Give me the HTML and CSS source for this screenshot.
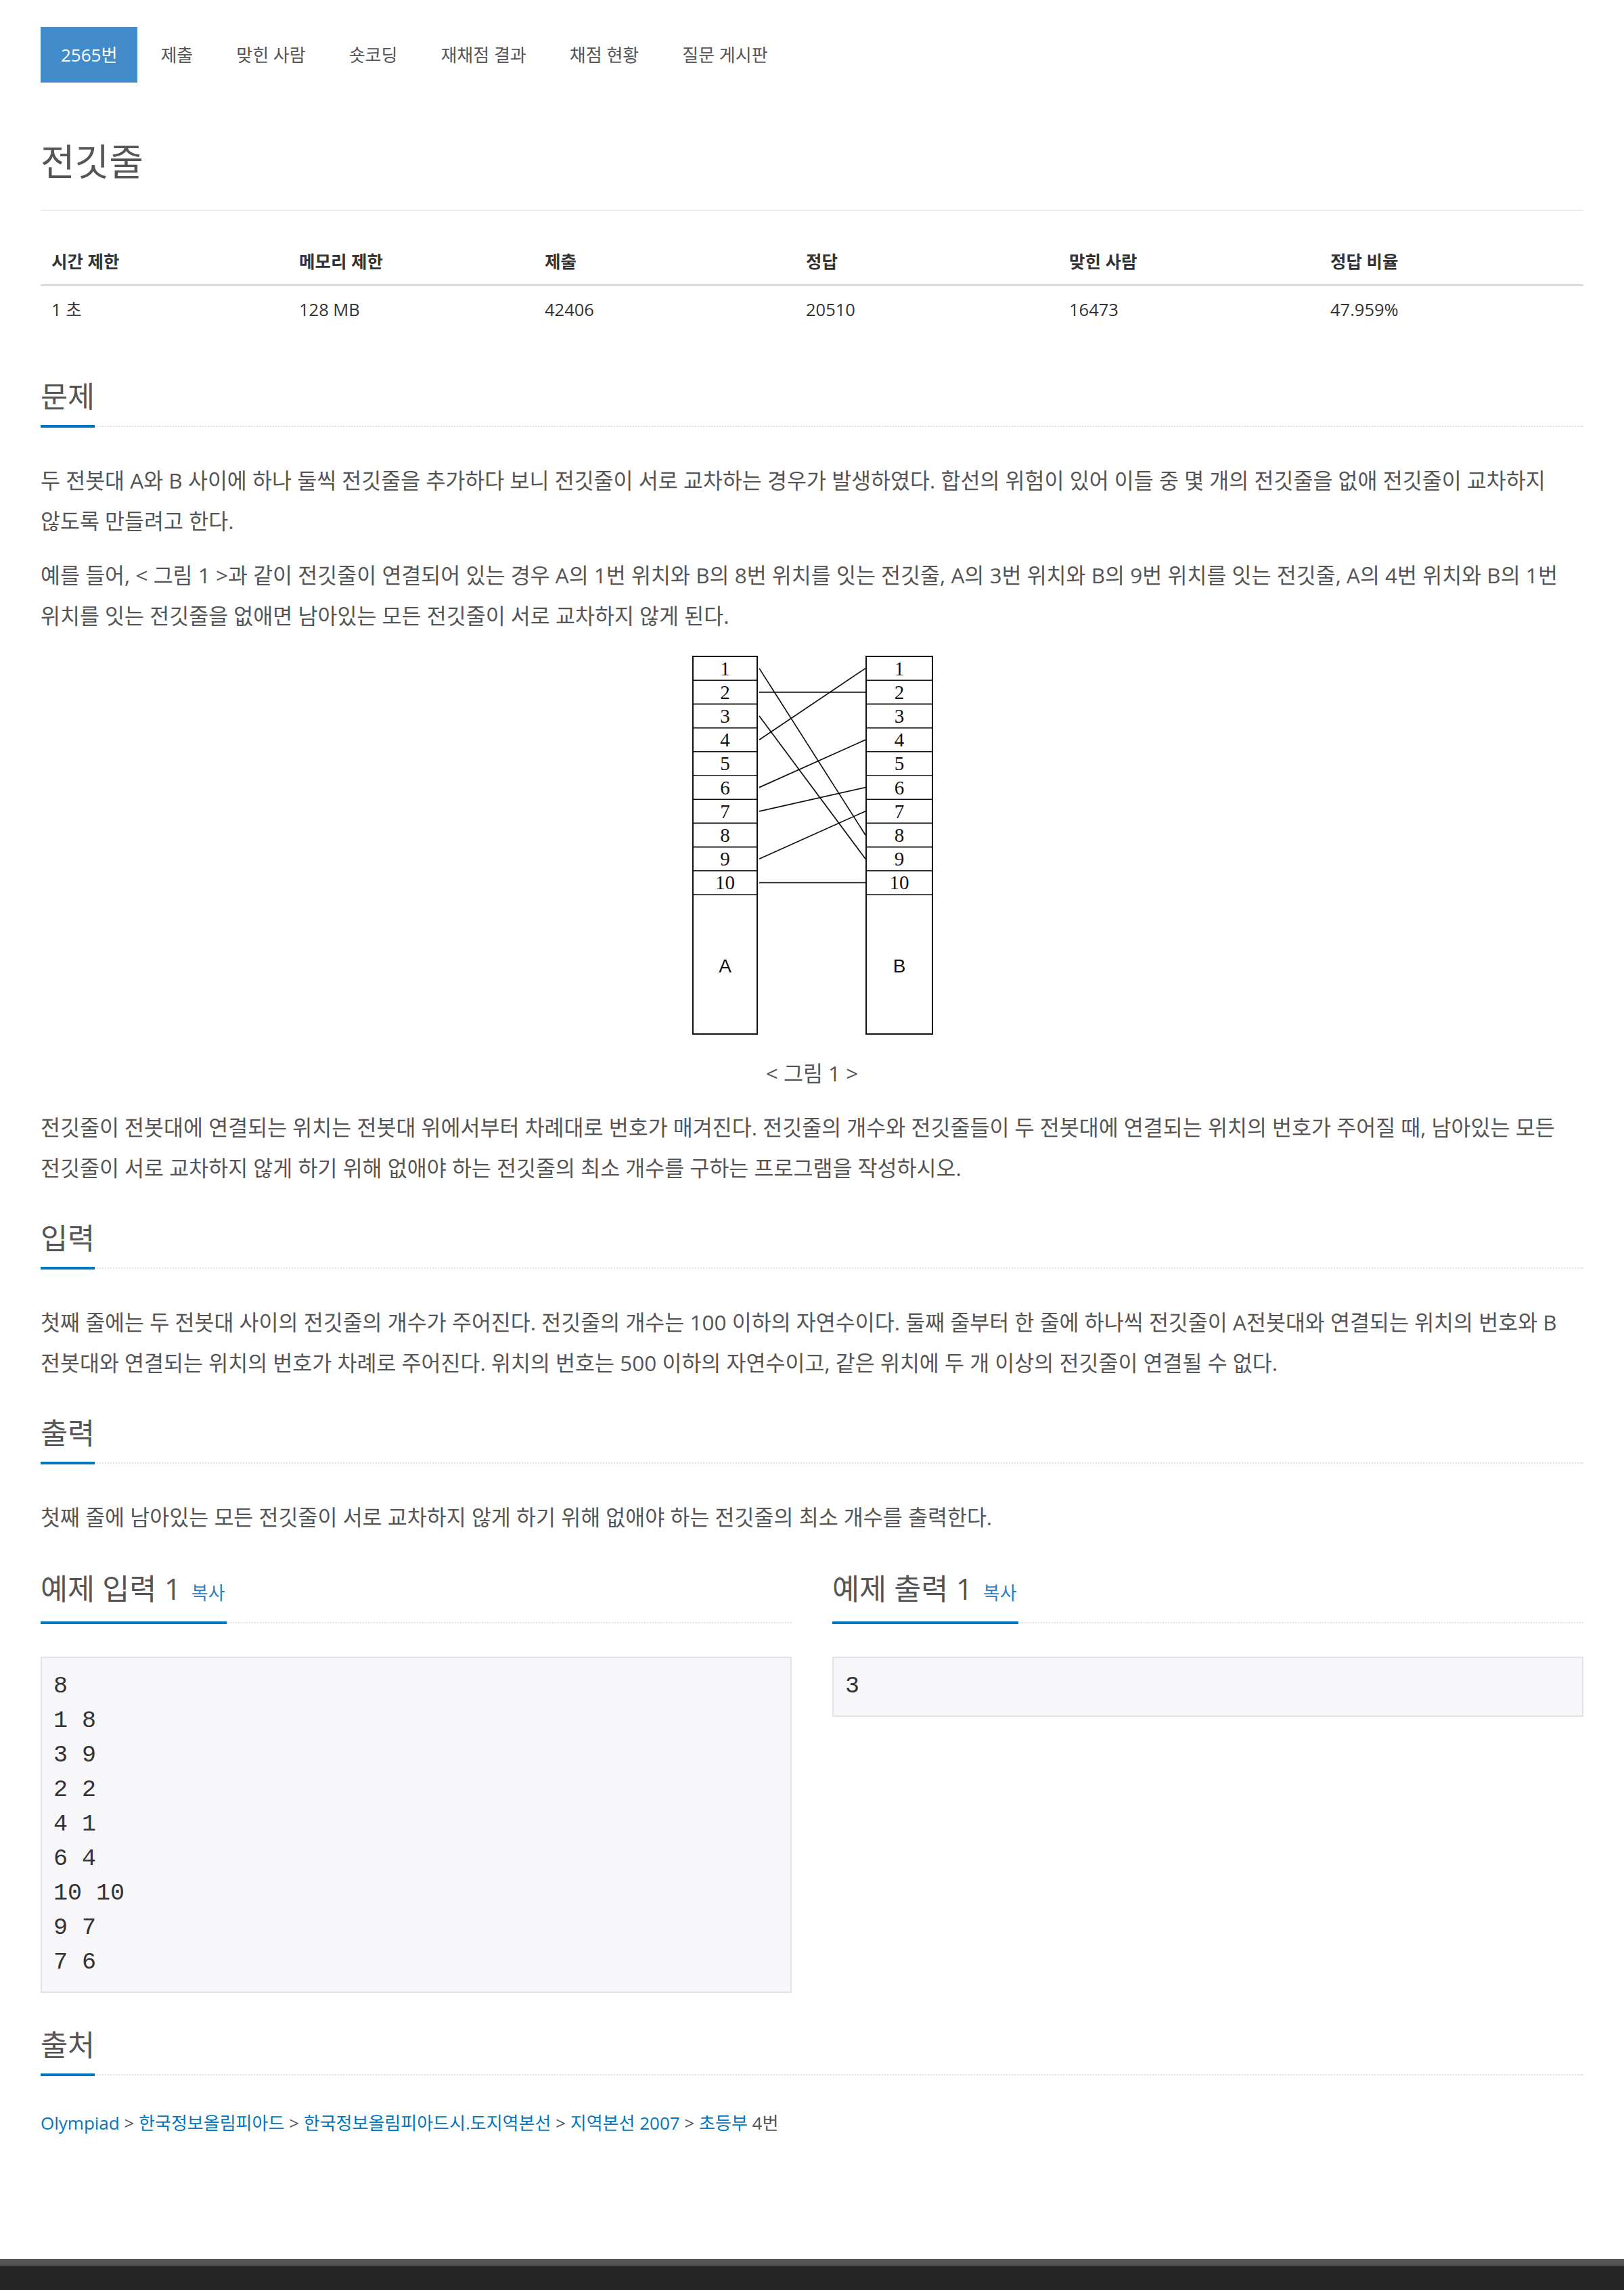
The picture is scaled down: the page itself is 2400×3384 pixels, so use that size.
FILE: index.html
```html
<!DOCTYPE html>
<html lang="ko">
<head>
<meta charset="utf-8">
<title>2565번: 전깃줄</title>
<link rel="stylesheet" href="styles.css">
</head>
<body>
<div class="page">
  <ul class="tabs">
    <li class="active"><a>2565번</a></li>
    <li><a>제출</a></li>
    <li><a>맞힌 사람</a></li>
    <li><a>숏코딩</a></li>
    <li><a>재채점 결과</a></li>
    <li><a>채점 현황</a></li>
    <li><a>질문 게시판</a></li>
  </ul>

  <div class="page-header"><h1>전깃줄</h1></div>

  <div class="info">
    <div class="th">시간 제한</div>
    <div class="th">메모리 제한</div>
    <div class="th">제출</div>
    <div class="th">정답</div>
    <div class="th">맞힌 사람</div>
    <div class="th">정답 비율</div>
    <div class="td">1 초</div>
    <div class="td">128 MB</div>
    <div class="td">42406</div>
    <div class="td">20510</div>
    <div class="td">16473</div>
    <div class="td">47.959%</div>
  </div>

  <section class="sec sec-problem">
    <div class="headline"><h2>문제</h2></div>
    <p>두 전봇대 A와 B 사이에 하나 둘씩 전깃줄을 추가하다 보니 전깃줄이 서로 교차하는 경우가 발생하였다. 합선의 위험이 있어 이들 중 몇 개의 전깃줄을 없애 전깃줄이 교차하지 않도록 만들려고 한다.</p>
    <p>예를 들어, &lt; 그림 1 &gt;과 같이 전깃줄이 연결되어 있는 경우 A의 1번 위치와 B의 8번 위치를 잇는 전깃줄, A의 3번 위치와 B의 9번 위치를 잇는 전깃줄, A의 4번 위치와 B의 1번 위치를 잇는 전깃줄을 없애면 남아있는 모든 전깃줄이 서로 교차하지 않게 된다.</p>
    <div class="figure">
      <svg class="fig" width="362" height="562" viewBox="0 0 362 562">
        <g fill="none" stroke="#111" stroke-width="2">
          <rect x="5" y="2" width="95" height="558"/>
          <rect x="261" y="2" width="98" height="558"/>
        </g>
        <g stroke="#111" stroke-width="1.6">
          <line x1="5" x2="100" y1="37.2" y2="37.2"/>
          <line x1="5" x2="100" y1="72.4" y2="72.4"/>
          <line x1="5" x2="100" y1="107.6" y2="107.6"/>
          <line x1="5" x2="100" y1="142.8" y2="142.8"/>
          <line x1="5" x2="100" y1="178" y2="178"/>
          <line x1="5" x2="100" y1="213.2" y2="213.2"/>
          <line x1="5" x2="100" y1="248.4" y2="248.4"/>
          <line x1="5" x2="100" y1="283.6" y2="283.6"/>
          <line x1="5" x2="100" y1="318.8" y2="318.8"/>
          <line x1="5" x2="100" y1="354" y2="354"/>
          <line x1="261" x2="359" y1="37.2" y2="37.2"/>
          <line x1="261" x2="359" y1="72.4" y2="72.4"/>
          <line x1="261" x2="359" y1="107.6" y2="107.6"/>
          <line x1="261" x2="359" y1="142.8" y2="142.8"/>
          <line x1="261" x2="359" y1="178" y2="178"/>
          <line x1="261" x2="359" y1="213.2" y2="213.2"/>
          <line x1="261" x2="359" y1="248.4" y2="248.4"/>
          <line x1="261" x2="359" y1="283.6" y2="283.6"/>
          <line x1="261" x2="359" y1="318.8" y2="318.8"/>
          <line x1="261" x2="359" y1="354" y2="354"/>
        </g>
        <g stroke="#111" stroke-width="1.7">
          <line x1="103" y1="19.6" x2="260" y2="266"/>
          <line x1="103" y1="54.8" x2="260" y2="54.8"/>
          <line x1="103" y1="90" x2="260" y2="301.2"/>
          <line x1="103" y1="125.2" x2="260" y2="19.6"/>
          <line x1="103" y1="195.6" x2="260" y2="125.2"/>
          <line x1="103" y1="230.8" x2="260" y2="195.6"/>
          <line x1="103" y1="301.2" x2="260" y2="230.8"/>
          <line x1="103" y1="336.4" x2="260" y2="336.4"/>
        </g>
        <g class="num" text-anchor="middle">
          <text x="52.5" y="29.6">1</text>
          <text x="52.5" y="64.8">2</text>
          <text x="52.5" y="100">3</text>
          <text x="52.5" y="135.2">4</text>
          <text x="52.5" y="170.4">5</text>
          <text x="52.5" y="205.6">6</text>
          <text x="52.5" y="240.8">7</text>
          <text x="52.5" y="276">8</text>
          <text x="52.5" y="311.2">9</text>
          <text x="52.5" y="346.4">10</text>
          <text x="310" y="29.6">1</text>
          <text x="310" y="64.8">2</text>
          <text x="310" y="100">3</text>
          <text x="310" y="135.2">4</text>
          <text x="310" y="170.4">5</text>
          <text x="310" y="205.6">6</text>
          <text x="310" y="240.8">7</text>
          <text x="310" y="276">8</text>
          <text x="310" y="311.2">9</text>
          <text x="310" y="346.4">10</text>
        </g>
        <g class="lbl" text-anchor="middle">
          <text x="52.5" y="469">A</text>
          <text x="310" y="469">B</text>
        </g>
      </svg>
    </div>
    <p class="caption">&lt; 그림 1 &gt;</p>
    <p>전깃줄이 전봇대에 연결되는 위치는 전봇대 위에서부터 차례대로 번호가 매겨진다. 전깃줄의 개수와 전깃줄들이 두 전봇대에 연결되는 위치의 번호가 주어질 때, 남아있는 모든 전깃줄이 서로 교차하지 않게 하기 위해 없애야 하는 전깃줄의 최소 개수를 구하는 프로그램을 작성하시오.</p>
  </section>

  <section class="sec sec-input">
    <div class="headline"><h2>입력</h2></div>
    <p>첫째 줄에는 두 전봇대 사이의 전깃줄의 개수가 주어진다. 전깃줄의 개수는 100 이하의 자연수이다. 둘째 줄부터 한 줄에 하나씩 전깃줄이 A<wbr>전봇대와 연결되는 위치의 번호와 B<wbr>전봇대와 연결되는 위치의 번호가 차례로 주어진다. 위치의 번호는 500 이하의 자연수이고, 같은 위치에 두 개 이상의 전깃줄이 연결될 수 없다.</p>
  </section>

  <section class="sec sec-output">
    <div class="headline"><h2>출력</h2></div>
    <p>첫째 줄에 남아있는 모든 전깃줄이 서로 교차하지 않게 하기 위해 없애야 하는 전깃줄의 최소 개수를 출력한다.</p>
  </section>

  <div class="samples">
    <div class="sample">
      <div class="headline"><h2>예제 입력 1 <a class="copy">복사</a></h2></div>
      <pre class="sampledata">8
1 8
3 9
2 2
4 1
6 4
10 10
9 7
7 6</pre>
    </div>
    <div class="sample">
      <div class="headline"><h2>예제 출력 1 <a class="copy">복사</a></h2></div>
      <pre class="sampledata">3</pre>
    </div>
  </div>

  <section class="sec sec-source">
    <div class="headline"><h2>출처</h2></div>
    <p class="source"><a>Olympiad</a> &gt; <a>한국정보올림피아드</a> &gt; <a>한국정보올림피아드시.도지역본선</a> &gt; <a>지역본선 2007</a> &gt; <a>초등부</a> 4번</p>
  </section>
</div>
<footer class="footer"></footer>
</body>
</html>
```

FILE: styles.css
```css
* { box-sizing: border-box; }
html, body { margin: 0; padding: 0; background: #fff; }
body {
  font-family: "Open Sans", "Noto Sans CJK KR", sans-serif;
  color: #333;
  word-break: keep-all;
}
.page {
  width: 2400px;
  padding: 40px 60px 0;
}

/* tabs */
.tabs {
  display: flex;
  gap: 4px;
  list-style: none;
  margin: 0;
  padding: 0;
}
.tabs a {
  display: block;
  padding: 20px 30px;
  line-height: 42px;
  font-size: 26px;
  color: #555;
}
.tabs .active a {
  background: #428bca;
  color: #fff;
}

/* title */
.page-header {
  margin-top: 86px;
  padding-bottom: 42px;
  border-bottom: 2px solid #eee;
}
.page-header h1 {
  margin: 0;
  font-size: 55px;
  line-height: 60px;
  font-weight: 400;
  color: #555;
}

/* info table */
.info {
  display: grid;
  grid-template-columns: 366fr 363fr 386fr 389fr 386fr 390fr;
  margin-top: 40px;
  font-size: 25.5px;
  color: #333;
}
.info .th {
  font-weight: 700;
  padding: 16px;
  line-height: 36px;
  border-bottom: 3px solid #ddd;
}
.info .td {
  padding: 16px;
  line-height: 36px;
}

/* sections */
.sec { margin-top: 46px; }
.sec-problem { margin-top: 67px; }
.sec-source { margin-top: 49px; }

.headline {
  border-bottom: 2px dotted #dfe3e8;
  margin-bottom: 49px;
}
.headline h2 {
  display: inline-block;
  margin: 0 0 -3px;
  padding-bottom: 14px;
  font-size: 43.5px;
  line-height: 56px;
  font-weight: 400;
  color: #555;
  border-bottom: 4px solid #0076c0;
}
.copy {
  font-size: 27px;
  color: #2f7fc4;
  margin-left: 4px;
  margin-right: 2px;
}

.sec p {
  margin: 0 0 20px;
  font-size: 31.5px;
  line-height: 60px;
  color: #555;
}
.figure {
  padding-top: 8px;
  margin-bottom: 26px;
}
.fig {
  display: block;
  margin: 0 auto;
}
.fig .num text {
  font-family: "Liberation Serif", serif;
  font-size: 29px;
  fill: #111;
}
.fig .lbl text {
  font-family: "Liberation Sans", sans-serif;
  font-size: 28px;
  fill: #111;
}
.sec p.caption {
  text-align: center;
}

/* samples */
.samples {
  display: grid;
  grid-template-columns: 1fr 1fr;
  gap: 60px;
  margin-top: 48px;
  align-items: start;
}
.sampledata {
  margin: 0;
  padding: 17px;
  border: 2px solid #e1e1e8;
  background: #f7f7f9;
  font-family: "Liberation Mono", monospace;
  font-size: 35px;
  line-height: 51px;
  color: #333;
  white-space: pre;
}

/* source */
.sec p.source {
  font-size: 26px;
  line-height: 42px;
  color: #555;
}
.source a { color: #0076c0; }

/* footer */
.footer {
  margin-top: 180px;
  border-top: 10px solid #555;
  background: #262626;
  height: 140px;
}
```
